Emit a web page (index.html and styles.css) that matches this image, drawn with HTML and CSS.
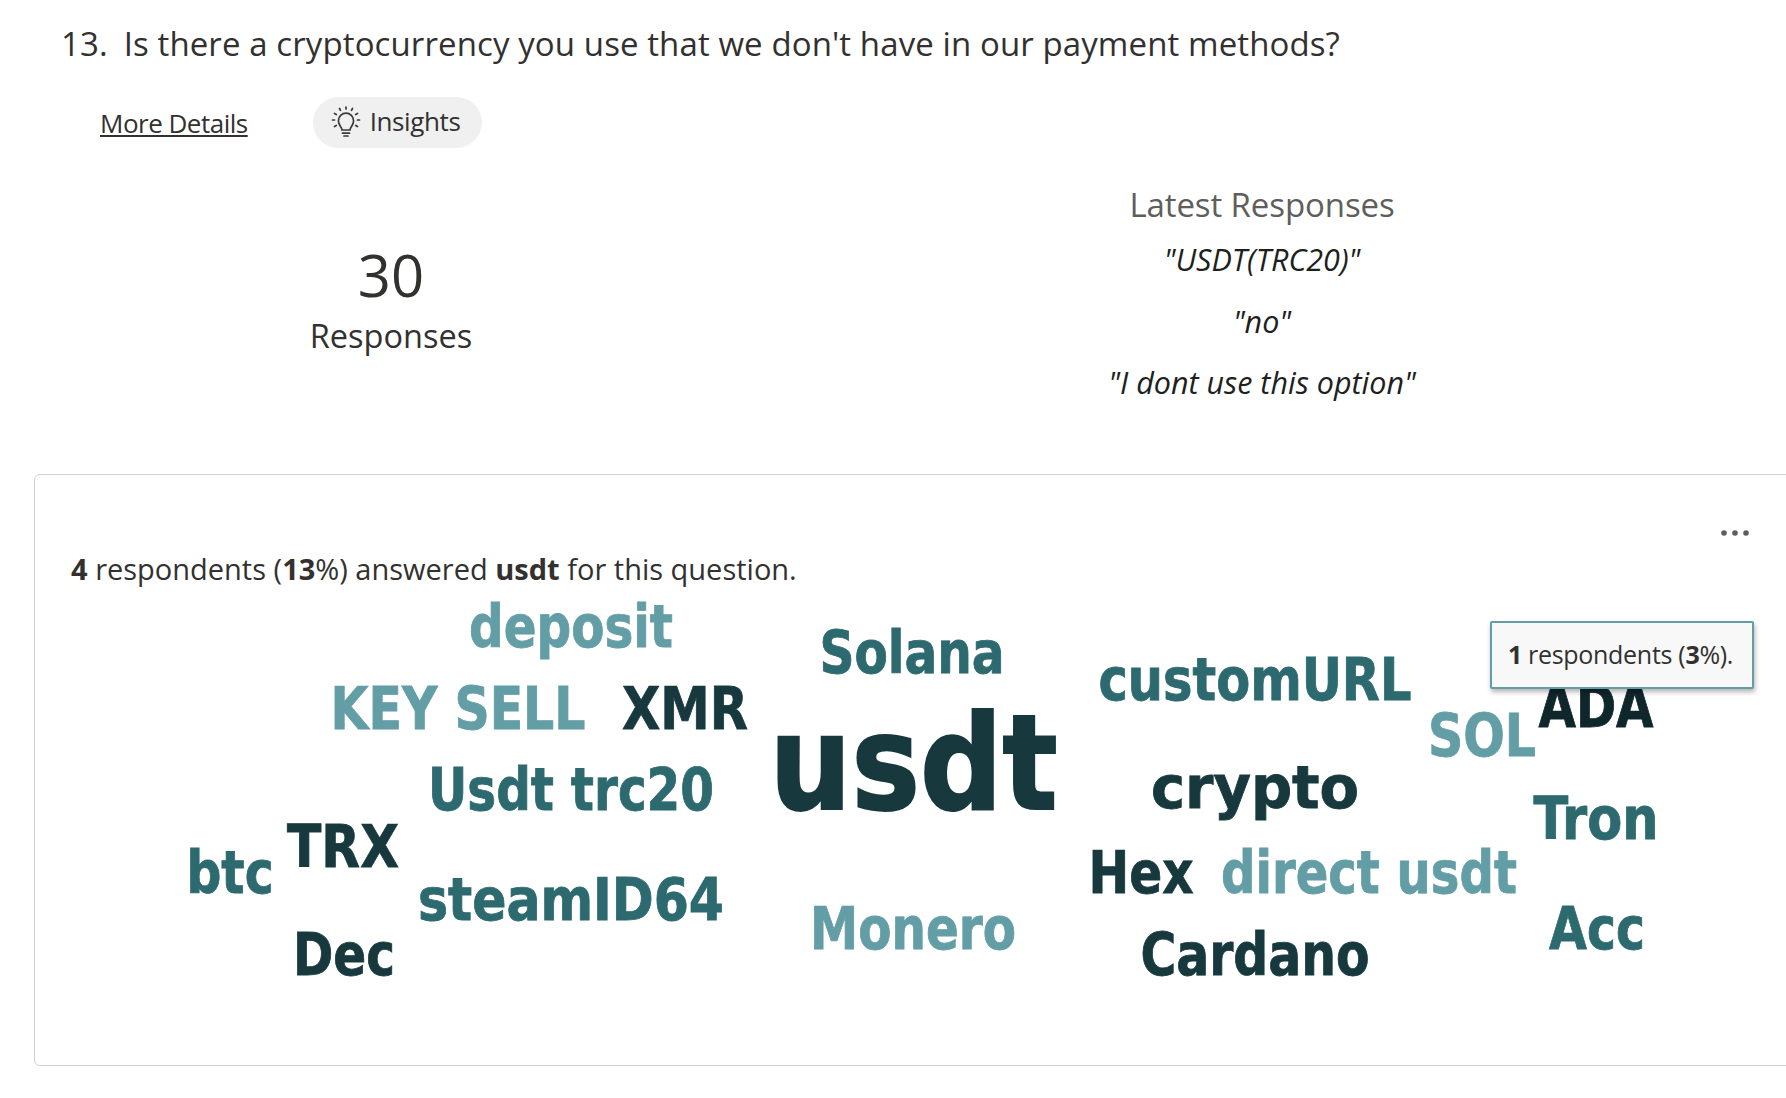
FILE: index.html
```html
<!DOCTYPE html>
<html lang="en">
<head>
    <meta charset="UTF-8">
    <meta name="viewport" content="width=device-width, initial-scale=1.0">
    <title>Question 13 results</title>
    <link rel="stylesheet" href="styles.css">
</head>
<body>
    <h2 class="question"><span class="question-num">13.</span>Is there a cryptocurrency you use that we don't have in our payment methods?</h2>

    <div class="actions">
        <a class="more-details" href="#">More Details</a>
        <button class="insights">
            <svg class="bulb" viewBox="0 0 32 32" fill="none" stroke="#3b3a39" stroke-width="1.7" stroke-linecap="round">
                <path d="M12 24c0-3-3.600-4.600-3.600-9.200a7.600 7.600 0 0 1 15.200 0c0 4.600-3.600 6.200-3.600 9.200z"/>
                <path d="M12.500 27.200h7M14 30h4"/>
                <path d="M16 1v2M9.500 2.500l1 1.800M22.500 2.500l-1 1.800M4.500 7.500l1.800 1M27.500 7.500l-1.800 1M2.500 14h2M27.500 14h2M4.500 20.500l1.800-1M27.500 20.500l-1.800-1"/>
            </svg>
            <span class="insights-label">Insights</span>
        </button>
    </div>

    <div class="summary">
        <div class="count">
            <div class="count-num">30</div>
            <div class="count-label">Responses</div>
        </div>
        <div class="latest">
            <div class="latest-title">Latest Responses</div>
            <div class="latest-item">"USDT(TRC20)"</div>
            <div class="latest-item">"no"</div>
            <div class="latest-item">"I dont use this option"</div>
        </div>
    </div>

    <div class="card">
        <div class="card-menu">
            <svg width="30" height="8" viewBox="0 0 30 8" fill="#605e5c">
                <circle cx="4" cy="4" r="2.800"/>
                <circle cx="15" cy="4" r="2.800"/>
                <circle cx="26" cy="4" r="2.800"/>
            </svg>
        </div>
        <p class="card-text"><b>4</b> respondents (<b>13</b>%) answered <b>usdt</b> for this question.</p>

        <svg class="cloud" viewBox="35 600 1751 465" width="1751" height="465">
            <text class="light" x="571" y="647" font-size="58" textLength="204" lengthAdjust="spacingAndGlyphs">deposit</text>
            <text class="mid" x="912" y="673" font-size="58" textLength="185" lengthAdjust="spacingAndGlyphs">Solana</text>
            <text class="light" x="458" y="729" font-size="58" textLength="255" lengthAdjust="spacingAndGlyphs">KEY SELL</text>
            <text class="dark" x="685" y="729" font-size="58" textLength="126" lengthAdjust="spacingAndGlyphs">XMR</text>
            <text class="dark big" x="913.500" y="809" font-size="132" textLength="288" lengthAdjust="spacingAndGlyphs">usdt</text>
            <text class="mid" x="1255" y="700" font-size="58" textLength="313" lengthAdjust="spacingAndGlyphs">customURL</text>
            <text class="darkest" x="1596" y="727" font-size="58" textLength="115" lengthAdjust="spacingAndGlyphs">ADA</text>
            <text class="light" x="1482" y="756" font-size="58" textLength="108" lengthAdjust="spacingAndGlyphs">SOL</text>
            <text class="mid" x="571" y="810" font-size="58" textLength="286" lengthAdjust="spacingAndGlyphs">Usdt trc20</text>
            <text class="dark" x="1255" y="808" font-size="58" textLength="208" lengthAdjust="spacingAndGlyphs">crypto</text>
            <text class="mid" x="1596" y="839" font-size="58" textLength="125" lengthAdjust="spacingAndGlyphs">Tron</text>
            <text class="dark" x="343" y="867" font-size="58" textLength="112" lengthAdjust="spacingAndGlyphs">TRX</text>
            <text class="mid" x="230" y="893" font-size="58" textLength="87" lengthAdjust="spacingAndGlyphs">btc</text>
            <text class="dark" x="1141" y="893" font-size="58" textLength="105" lengthAdjust="spacingAndGlyphs">Hex</text>
            <text class="light" x="1369" y="893" font-size="58" textLength="296" lengthAdjust="spacingAndGlyphs">direct usdt</text>
            <text class="mid" x="571" y="920" font-size="58" textLength="306" lengthAdjust="spacingAndGlyphs">steamID64</text>
            <text class="light" x="913" y="949" font-size="58" textLength="206" lengthAdjust="spacingAndGlyphs">Monero</text>
            <text class="mid" x="1597" y="949" font-size="58" textLength="96" lengthAdjust="spacingAndGlyphs">Acc</text>
            <text class="dark" x="344" y="975" font-size="58" textLength="102" lengthAdjust="spacingAndGlyphs">Dec</text>
            <text class="dark" x="1255" y="975" font-size="58" textLength="229" lengthAdjust="spacingAndGlyphs">Cardano</text>
        </svg>

        <div class="tip"><span class="tip-text"><b>1</b> respondents (<b>3</b>%).</span></div>
    </div>
</body>
</html>
```

FILE: styles.css
```css
body {
    margin: 0;
    height: 1098px;
    overflow: hidden;
    font-family: "Open Sans", "Noto Sans", sans-serif;
    color: #323130;
    background-color: #fff;
}
.question {
    margin: 0;
    padding: 20px 0 0 61px;
    font-size: 33px;
    line-height: 48px;
    font-weight: 400;
    letter-spacing: 0.1px;
    white-space: nowrap;
}
.question-num {
    margin-right: 16px;
}
.actions {
    display: flex;
    align-items: center;
    gap: 65px;
    margin-top: 29px;
    padding-left: 100px;
}
.more-details {
    font-size: 26px;
    letter-spacing: -0.5px;
    color: #323130;
}
.insights {
    display: flex;
    align-items: center;
    gap: 8px;
    width: 169px;
    height: 51px;
    padding: 0 0 0 17px;
    border: none;
    border-radius: 26px;
    background-color: #f0f0f0;
    font-family: inherit;
    font-size: 26px;
    letter-spacing: -0.4px;
    color: #323130;
}
.insights-label {
    padding-bottom: 4px;
}
.bulb {
    width: 32px;
    height: 32px;
    margin-bottom: 2px;
}
.summary {
    display: flex;
    height: 326px;
}
.count {
    width: 782px;
    padding-top: 89px;
    text-align: center;
}
.count-num {
    font-size: 58px;
    line-height: 75px;
}
.count-label {
    font-size: 32.5px;
    line-height: 48px;
}
.latest {
    width: 960px;
    padding-top: 33px;
    text-align: center;
}
.latest-title {
    font-size: 33px;
    line-height: 48px;
    letter-spacing: -0.1px;
    color: #605e5c;
}
.latest-item {
    font-size: 30.5px;
    line-height: 61.7px;
    font-style: italic;
    color: #201f1e;
}
.card {
    position: relative;
    width: 1790px;
    height: 592px;
    margin-left: 34px;
    border: 1px solid #d2d0ce;
    border-radius: 6px;
    box-sizing: border-box;
}
.card-menu {
    display: flex;
    justify-content: flex-end;
    padding: 54px 73px 0 0;
}
.card-text {
    margin: 0;
    padding: 11px 0 0 36px;
    font-size: 29px;
    line-height: 42px;
}
.cloud {
    display: block;
    margin-top: 10px;
    overflow: visible;
}
.cloud text {
    font-family: "DejaVu Sans", sans-serif;
    font-stretch: condensed;
    font-weight: 700;
    text-anchor: middle;
    stroke-width: 0.8px;
}
.cloud .big {
    stroke-width: 2px;
}
.cloud .light {
    fill: #639ea6;
    stroke: #639ea6;
}
.cloud .mid {
    fill: #2d6a70;
    stroke: #2d6a70;
}
.cloud .dark {
    fill: #17393d;
    stroke: #17393d;
}
.cloud .darkest {
    fill: #0f262a;
    stroke: #0f262a;
}
.tip {
    position: absolute;
    top: 146px;
    left: 1455px;
    width: 264px;
    height: 68px;
    display: flex;
    align-items: center;
    justify-content: center;
    box-sizing: border-box;
    border: 2px solid #639ea6;
    border-radius: 2px;
    background-color: #f8f8f8;
    box-shadow: 1px 3px 5px rgba(0, 0, 0, 0.3);
    font-size: 25px;
    letter-spacing: -0.3px;
}
.tip-text {
    padding: 0 3px 3px 0;
}
```
